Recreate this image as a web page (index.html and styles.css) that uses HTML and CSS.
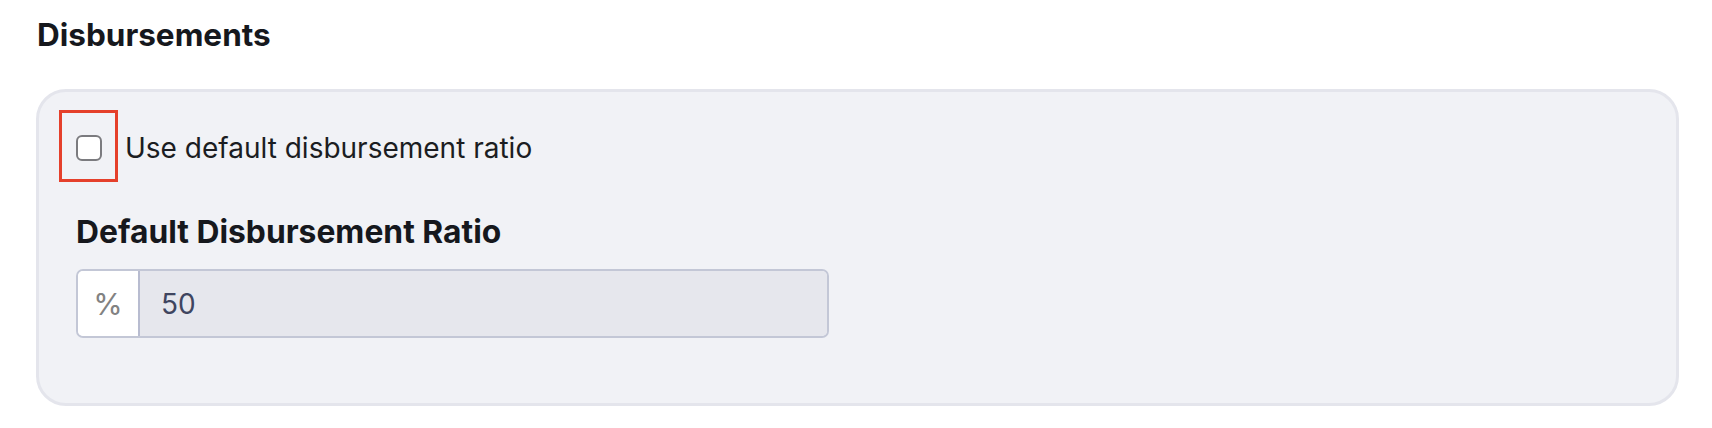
FILE: index.html
```html
<!DOCTYPE html>
<html lang="en">
<head>
    <meta charset="UTF-8">
    <meta name="viewport" content="width=device-width, initial-scale=1.0">
    <title>Disbursements</title>
    <link rel="stylesheet" href="styles.css">
</head>

<body>
    <section class="settings-section">
        <h2 class="section-title">Disbursements</h2>

        <div class="settings-card">
            <label class="check-row">
                <span class="check-highlight">
                    <input type="checkbox" id="use-default-ratio">
                </span>
                <span class="check-text">Use default disbursement ratio</span>
            </label>

            <div class="field">
                <label class="field-label" for="default-ratio">Default Disbursement Ratio</label>
                <div class="input-group">
                    <span class="input-addon">%</span>
                    <input type="text" id="default-ratio" class="input-control" value="50" disabled>
                </div>
            </div>
        </div>
    </section>
</body>
</html>
```

FILE: styles.css
```css
/* reset */
* {
    margin: 0;
    padding: 0;
    box-sizing: border-box;
}

body {
    font-family: Inter, "Noto Sans", sans-serif;
    background: #fff;
    color: #16181d;
}

.settings-section {
    padding: 16px 33px 25px 36px;
}

/* section heading */
.section-title {
    font-size: 31.5px;
    font-weight: 700;
    line-height: 38px;
    padding-left: 1px;
    margin-bottom: 35px;
}

/* grey card */
.settings-card {
    background: #f1f2f6;
    border: 3px solid #e4e5ec;
    border-radius: 30px;
    padding: 18px 40px 65px 20px;
}

/* checkbox row */
.check-row {
    display: flex;
    align-items: center;
    cursor: pointer;
}

.check-highlight {
    display: flex;
    align-items: center;
    justify-content: center;
    width: 59px;
    height: 72px;
    border: 3px solid #e5402b;
    padding-top: 4px;
    margin-right: 7px;
}

.check-highlight input {
    appearance: none;
    -webkit-appearance: none;
    width: 26px;
    height: 26px;
    background: #fff;
    border: 2px solid #7b7b7f;
    border-radius: 6px;
    cursor: pointer;
}

.check-text {
    font-size: 28px;
    color: #1b1d22;
    margin-top: 4px;
}

/* ratio field */
.field {
    margin-top: 31px;
    padding-left: 17px;
}

.field-label {
    display: block;
    font-size: 31.8px;
    font-weight: 700;
    line-height: 38px;
    margin-bottom: 18px;
}

.input-group {
    display: flex;
    width: 753px;
    height: 69px;
    border: 2px solid #c3c7d6;
    border-radius: 7px;
    overflow: hidden;
}

.input-addon {
    display: flex;
    align-items: center;
    justify-content: center;
    width: 62px;
    background: #fff;
    border-right: 2px solid #b8bcd0;
    font-size: 30px;
    color: #828282;
}

.input-control {
    flex: 1;
    border: none;
    background: #e6e7ed;
    padding: 0 21px;
    font-family: inherit;
    font-size: 28px;
    color: #3f4560;
    -webkit-text-fill-color: #3f4560;
    opacity: 1;
}
```
